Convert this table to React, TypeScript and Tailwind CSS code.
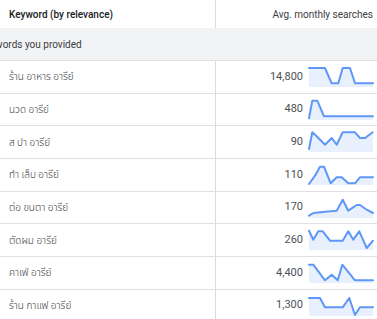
import React from "react";

type Row = { kw: string; vol: string; pts: [number, number][] };

const rows: Row[] = [
  { kw: "ร้าน อาหาร อารีย์", vol: "14,800", pts: [[0,1],[16,1],[22.7,16.3],[29.3,16.3],[33.7,1],[41,1],[46,16.3],[64,16.3]] },
  { kw: "นวด อารีย์", vol: "480", pts: [[0,18.3],[3.3,0.7],[8.3,0.7],[15,16.3],[64,16.3]] },
  { kw: "ส ปา อารีย์", vol: "90", pts: [[0,17],[3.3,0.3],[7.7,4.3],[16,12.7],[22.7,6],[27.7,12.7],[33.7,0.3],[46,0.3],[51,6],[56,6],[63.7,0.3]] },
  { kw: "ทำ เล็บ อารีย์", vol: "110", pts: [[0,19],[6,10.7],[11,1.7],[15,1.7],[21.7,18.3],[27.7,12.3],[32.7,12.3],[39.3,18.3],[46,18.3],[51,12.3],[64,12.3]] },
  { kw: "ต่อ ขนตา อารีย์", vol: "170", pts: [[0,17.7],[4.3,15],[16,13.7],[27.7,12.7],[33.7,1.7],[39.3,12.7],[47.7,7],[51,7],[57.7,11.7],[64,15]] },
  { kw: "ตัดผม อารีย์", vol: "260", pts: [[0,0.7],[4.3,9.7],[9.3,1.3],[13.7,1.3],[21,10.7],[33.7,10.7],[39.3,1.3],[44.3,9.7],[50.3,1.3],[57.7,18],[64,10.7]] },
  { kw: "คาเฟ่ อารีย์", vol: "4,400", pts: [[0,1.7],[4.3,1.7],[16,17.3],[22.7,11.7],[28.7,17.3],[33.3,1.7],[46,17.3],[64,17.3]] },
  { kw: "ร้าน กาแฟ อารีย์", vol: "1,300", pts: [[0,2],[11,2],[16,11.3],[33.7,11.3],[40.3,2],[46,19],[51,11.3],[64,11.3]] },
];

function Spark({ pts }: { pts: [number, number][] }) {
  const line = pts.map((p) => `${p[0]},${p[1] + 1}`).join(" ");
  const area = `0,21 ${line} 64,21`;
  return (
    <svg width="64" height="22" viewBox="0 0 64 22" className="block shrink-0 overflow-visible">
      <polygon points={area} fill="#e8f0fe" />
      <polyline points={line} fill="none" stroke="#5e97f6" strokeWidth="2" strokeLinejoin="round" strokeLinecap="round" />
    </svg>
  );
}

export default function App() {
  const font = { fontFamily: "Roboto, 'Noto Sans Thai', 'Noto Sans', 'DejaVu Sans', sans-serif" };
  return (
    <div className="w-[377px] h-[319px] overflow-hidden bg-white text-[#3c4043]" style={font}>
      <div className="flex h-[28px]">
        <div className="w-[216px] shrink-0 flex items-center pl-[9px] text-[10px] font-medium text-[#202124] border-r border-[#dadce0]">
          Keyword (by relevance)
        </div>
        <div className="flex-1 flex items-center justify-end pr-[4px] text-[10px] text-[#3c4043]">
          Avg. monthly searches
        </div>
      </div>
      <div className="h-[32px] bg-[#f1f3f4] flex items-center text-[10px] text-[#3c4043] overflow-hidden">
        <span className="ml-[-21px] whitespace-nowrap">Keywords you provided</span>
      </div>
      {rows.map((r) => (
        <div key={r.kw} className="flex h-[32.7px] border-t border-[#e0e0e0]">
          <div className="w-[216px] shrink-0 flex items-center pl-[9px] text-[10px] font-light text-[#3c4043] border-r border-[#dadce0]">
            {r.kw}
          </div>
          <div className="flex-1 flex items-center justify-end pr-[4px]">
            <span className="text-[11px] text-[#4d5156] mr-[6px]">{r.vol}</span>
            <Spark pts={r.pts} />
          </div>
        </div>
      ))}
    </div>
  );
}
